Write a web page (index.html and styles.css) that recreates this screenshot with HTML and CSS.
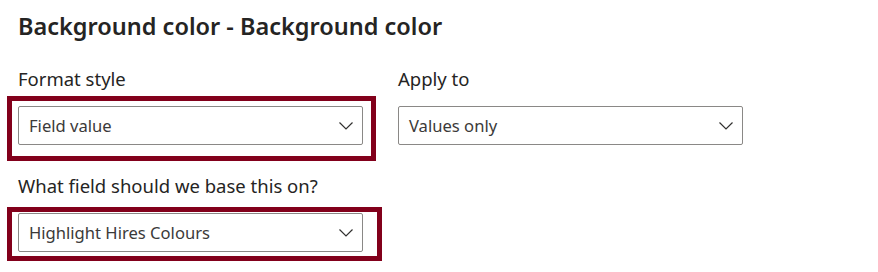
FILE: index.html
```html
<!DOCTYPE html>
<html lang="en">
<head>
  <meta charset="UTF-8">
  <meta name="viewport" content="width=device-width, initial-scale=1.0">
  <title>Background color</title>
  <link rel="stylesheet" href="styles.css">
</head>
<body>
  <div class="panel">
    <h1 class="title">Background color - Background color</h1>

    <div class="row">
      <div class="field">
        <label class="label">Format style</label>
        <div class="select">
          <span>Field value</span>
          <svg class="chevron" width="14" height="8" viewBox="0 0 14 8"><path d="M0.5 0.5 L7 7 L13.5 0.5" /></svg>
          <div class="highlight first"></div>
        </div>
      </div>
      <div class="field">
        <label class="label">Apply to</label>
        <div class="select">
          <span>Values only</span>
          <svg class="chevron" width="14" height="8" viewBox="0 0 14 8"><path d="M0.5 0.5 L7 7 L13.5 0.5" /></svg>
        </div>
      </div>
    </div>

    <div class="field">
      <label class="label">What field should we base this on?</label>
      <div class="select">
        <span>Highlight Hires Colours</span>
        <svg class="chevron" width="14" height="8" viewBox="0 0 14 8"><path d="M0.5 0.5 L7 7 L13.5 0.5" /></svg>
        <div class="highlight second"></div>
      </div>
    </div>
  </div>
</body>
</html>
```

FILE: styles.css
```css
* {
  margin: 0;
  padding: 0;
  box-sizing: border-box;
}

body {
  background: #fff;
  font-family: "Noto Sans", "Open Sans", sans-serif;
  color: #252423;
}

.panel {
  padding: 9px 18px;
}

.title {
  font-size: 23.5px;
  font-weight: 600;
  line-height: 34px;
  margin-bottom: 24px;
}

.row {
  display: flex;
  gap: 35px;
  margin-bottom: 29px;
}

.field {
  display: flex;
  flex-direction: column;
}

.label {
  font-size: 18.5px;
  line-height: 24px;
  color: #252423;
  margin-bottom: 15px;
}

.select {
  position: relative;
  width: 345px;
  height: 39px;
  border: 1px solid #8a8886;
  border-radius: 2px;
  display: flex;
  align-items: center;
  justify-content: space-between;
  padding: 0 9px 0 10px;
  font-size: 16.6px;
  color: #3b3a39;
}

.chevron path {
  fill: none;
  stroke: #323130;
  stroke-width: 1.2;
}

.highlight {
  position: absolute;
  border: 5px solid #82001b;
  pointer-events: none;
}

.highlight.first {
  top: -11px;
  left: -12px;
  right: -14px;
  bottom: -17px;
}

.highlight.second {
  top: -7px;
  left: -12px;
  right: -20px;
  bottom: -10px;
}
```
